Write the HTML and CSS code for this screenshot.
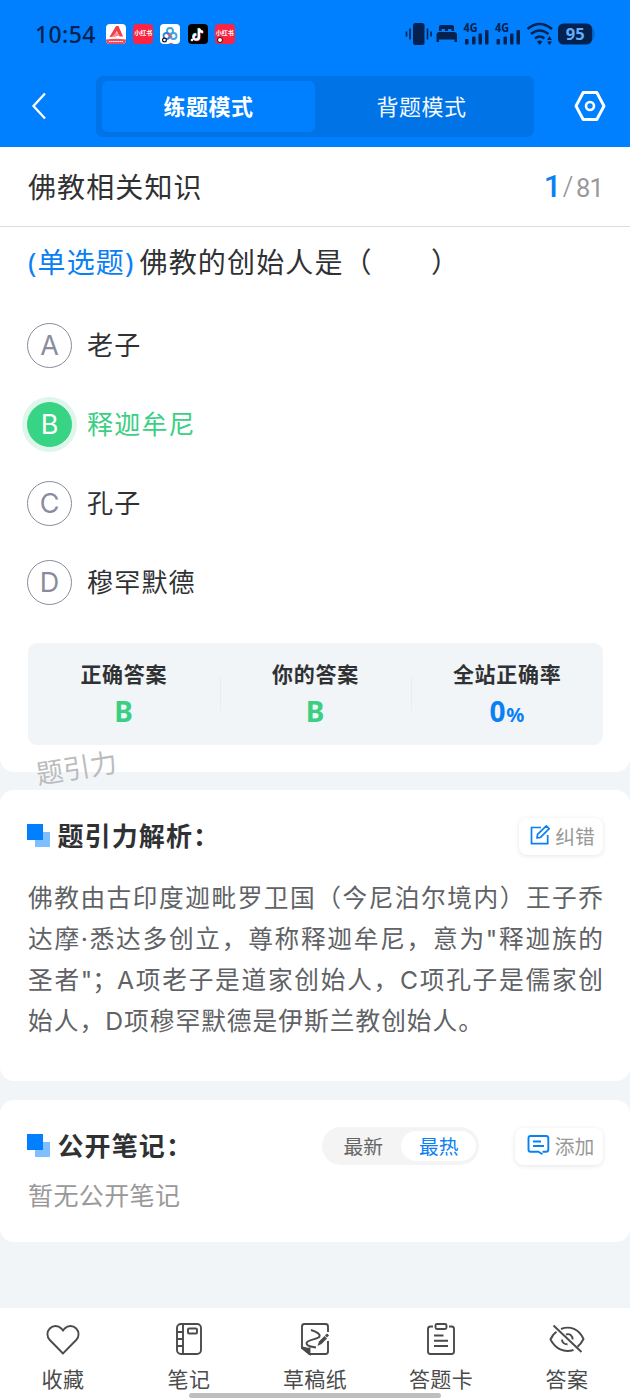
FILE: index.html
```html
<!DOCTYPE html>
<html lang="zh-CN">
<head>
<meta charset="utf-8">
<title>佛教相关知识</title>
<link rel="stylesheet" href="styles.css">
</head>
<body>
<div class="screen">
  <header class="top">
    <div class="status">
      <span class="clock">10:54</span>
      <div class="apps">
        <svg class="app" viewBox="0 0 20 20"><rect width="20" height="20" rx="4" fill="#fff"/><path d="M0 15.500Q10 14 20 15.500V16a4 4 0 0 1-4 4H4a4 4 0 0 1-4-4z" fill="#f14b58"/><path d="M3.500 13 10 2h2.500l4.500 10.500h-3.500L10.800 7 7 13z" fill="#ee3f4d"/><path d="m5 13 6-5 1.500 3 4 1.500q-5-1-8 .5z" fill="#f88b90"/><path d="M3 17.500h14" stroke="#fff" stroke-width="1" stroke-dasharray="1.500 .6"/></svg>
        <span class="app red">小红书</span>
        <svg class="app" viewBox="0 0 20 20"><rect width="20" height="20" rx="4" fill="#fff"/><g fill="none" stroke-width="1.800"><circle cx="10" cy="7" r="3" stroke="#35a6e6"/><circle cx="6.500" cy="12" r="3" stroke="#2f7fe0"/><circle cx="13.500" cy="12" r="3" stroke="#35a6e6"/><path d="m8 10 4 3" stroke="#f0506a"/></g><circle cx="4.500" cy="16" r="1.900" fill="#fff" stroke="#111" stroke-width="1.200"/><path d="M8 20q3-2 6 0z" fill="#f14b58"/></svg>
        <svg class="app" viewBox="0 0 20 20"><rect width="20" height="20" rx="4" fill="#000"/><g fill="none" stroke-width="2.200"><path d="M10.500 4v8.500a2.700 2.700 0 1 1-2.700-2.700M10.500 4q.5 3 4 3.600" stroke="#25e5e5"/><path d="M11.500 5v8.500a2.700 2.700 0 1 1-2.700-2.700M11.500 5q.5 3 4 3.600" stroke="#fb2c55"/><path d="M11 4.500V13a2.700 2.700 0 1 1-2.700-2.700M11 4.500q.5 3 4 3.600" stroke="#fff"/></g><circle cx="4" cy="16" r="1.300" fill="#fff"/></svg>
        <span class="app red dot">小红书</span>
      </div>
      <svg class="sys" viewBox="0 -6 190 36" width="190" height="36" fill="#04224d">
        <rect x="8" y="1" width="11.500" height="22" rx="2.500"/><path d="M5 6.500v11M1.500 9.500v5M22.500 6.500v11M26 9.500v5" stroke="#04224d" stroke-width="1.600"/>
        <path d="M34 9V5q0-2 2-2h11q2 0 2 2v4h-2.500V7h-3.500v2h-3V7h-3.500v2zM31.500 20v-7q0-3 3-3h14.500q3 0 3 3v7h-2.500v-2.500h-15.500V20z"/>
        <text x="58.500" y="10" class="net" textLength="14" lengthAdjust="spacingAndGlyphs">4G</text><rect x="60" y="17" width="3.500" height="5.500" rx="1"/><rect x="67" y="14.500" width="3.500" height="8" rx="1"/><rect x="73.500" y="11.500" width="3.500" height="11" rx="1"/><rect x="80" y="8" width="3.500" height="14.500" rx="1"/>
        <text x="90" y="10" class="net" textLength="14" lengthAdjust="spacingAndGlyphs">4G</text><rect x="91.500" y="17" width="3.500" height="5.500" rx="1"/><rect x="98.500" y="14.500" width="3.500" height="8" rx="1"/><rect x="105" y="11.500" width="3.500" height="11" rx="1"/><rect x="111.500" y="8" width="3.500" height="14.500" rx="1"/>
        <path d="M122.500 7Q134.500-3 147 7M126 12q8.500-7 17.500 0M130 16.500q4.800-4 9.500 0" fill="none" stroke="#04224d" stroke-width="2.400"/><path d="M132 19.500q2.700-2 5.400 0L134.700 23zM144.500 14l2.500 4h-5zM144.500 23l-2.500-3.500h5z"/>
        <path d="M184 4q5.500 1 5.500 8t-5.500 8z" fill="#0462c5"/><rect x="153" y="1.500" width="34" height="21" rx="5.500"/><text x="170.300" y="18.200" class="pct" text-anchor="middle">95</text>
      </svg>
    </div>
    <div class="bar">
      <svg class="back" viewBox="0 0 16 28" width="16" height="28"><path d="M14 1.500 2.500 14 14 26.500" fill="none" stroke="#fff" stroke-width="2.300"/></svg>
      <div class="modes"><span class="mode on">练题模式</span><span class="mode">背题模式</span></div>
      <svg class="gear" viewBox="0 0 32 32" width="32" height="32" fill="none" stroke="#fff"><path d="M9.200 2.500h13.600L30 16l-7.200 13.500H9.200L2 16z" stroke-width="2.900" stroke-linejoin="round"/><circle cx="16" cy="16" r="4" stroke-width="2.600"/></svg>
    </div>
  </header>
  <main>
    <section class="quiz">
      <div class="title"><h1>佛教相关知识</h1><p class="count"><b>1</b><i>/</i>81</p></div>
      <p class="question"><span class="kind">(单选题)</span>佛教的创始人是（　　）</p>
      <ul class="options">
        <li><span class="key">A</span>老子</li>
        <li class="right"><span class="key">B</span>释迦牟尼</li>
        <li><span class="key">C</span>孔子</li>
        <li><span class="key">D</span>穆罕默德</li>
      </ul>
      <div class="stats">
        <div class="stat"><span>正确答案</span><strong>B</strong></div>
        <div class="stat"><span>你的答案</span><strong>B</strong></div>
        <div class="stat"><span>全站正确率</span><strong class="rate">0<small>%</small></strong></div>
      </div>
      <span class="watermark">题引力</span>
    </section>
    <section class="card analysis">
      <div class="head">
        <i class="mark"></i><h2>题引力解析：</h2>
        <button class="action fix"><svg viewBox="0 0 22 22" width="22" height="22" fill="none" stroke="#0b80f5" stroke-width="1.700"><path d="M12 3.500H2.500v16.200h16.200V11"/><path d="m8 14 .6-3.600 8.700-8.600 2.900 2.900-8.700 8.700z" stroke-linejoin="round"/></svg>纠错</button>
      </div>
      <p class="text"><span>佛教由古印度迦毗罗卫国（今尼泊尔境内）王子乔</span><span>达摩·悉达多创立，尊称释迦牟尼，意为"释迦族的</span><span>圣者"；A项老子是道家创始人，C项孔子是儒家创</span><span>始人，D项穆罕默德是伊斯兰教创始人。</span></p>
    </section>
    <section class="card notes">
      <div class="head">
        <i class="mark"></i><h2>公开笔记：</h2>
        <div class="sort"><span>最新</span><span class="on">最热</span></div>
        <button class="action add"><svg viewBox="0 0 23 22" width="23" height="22" fill="none" stroke="#0b80f5" stroke-width="1.900"><path d="M15.500 17.800H19q2.300 0 2.300-2V4q0-2-2.300-2H3.500q-2 0-2 2v11.800q0 2 2 2h8l4 2.500" stroke-linejoin="round"/><path d="M6 7.500h8M6 12h11"/></svg>添加</button>
      </div>
      <p class="empty">暂无公开笔记</p>
    </section>
  </main>
  <nav class="tabs">
    <a><svg viewBox="0 0 36 36" width="36" height="36"><path d="M18 32.500 4.800 19a8.200 8.200 0 0 1 0-11.500 8 8 0 0 1 11.500 0L18 9.500l1.700-2a8 8 0 0 1 11.500 0 8.200 8.200 0 0 1 0 11.500z"/></svg>收藏</a>
    <a><svg viewBox="0 0 36 36" width="36" height="36"><rect x="6" y="3" width="24" height="30" rx="4"/><path d="M12 3v30M6 11h6M6 18h6M6 25h6"/><rect x="17" y="7.500" width="9" height="5" rx="1"/></svg>笔记</a>
    <a><svg viewBox="0 0 36 36" width="36" height="36"><path d="M31 11V5.500Q31 3 28.500 3h-21Q5 3 5 5.500V27l7.500 6h16q2.500 0 2.500-2.500V20"/><path d="M5 26.500q5 1.500 7.500 1V33z" fill="#4b4b4b"/><path d="M14 9c5 1.500 9.500 4 8.500 6.500-1.500 3-12 3-13 6.500-.3 3 5 4 9.500 4.500"/><path d="m20.500 25 1.500-4.500L27.500 15l2.500 2.500-5.500 5.500z" fill="#4b4b4b" stroke="none"/><path d="m29 13.500 2 2" stroke-width="3"/></svg>草稿纸</a>
    <a><svg viewBox="0 0 36 36" width="36" height="36"><path d="M10 5.500H7.500Q5 5.500 5 8v22.500Q5 33 7.500 33h21q2.500 0 2.500-2.500V8q0-2.500-2.500-2.500H26"/><rect x="12.500" y="3" width="11" height="5" rx="1.500"/><path d="M11 14.500h9.500M11 19.800h14M11 25h14"/></svg>答题卡</a>
    <a><svg viewBox="0 0 36 36" width="36" height="36"><path d="M12 8C21 4.500 30 8 34.500 18q-2.500 5-6 7.800M24.500 29C15 32 6.500 28 1.500 18.500q2.300-5.300 6-7.700"/><path d="M17 13.500c4-1.300 7 1.500 6.500 5M13 18.500c0 3 2.500 5 5.500 4.800M4.500 4.500 32.500 31"/></svg>答案</a>
    <i class="home"></i>
  </nav>
</div>
</body>
</html>
```
FILE: styles.css
```css
* { box-sizing: border-box; }
body, h1, h2, p, ul { margin: 0; padding: 0; }
body { background: #f1f5f8; font-family: "Noto Sans", "Noto Sans CJK SC", sans-serif; color: #303133; }
ul { list-style: none; }
i { font-style: normal; }
.screen { width: 630px; height: 1400px; display: flex; flex-direction: column; overflow: hidden; }
main { flex: 1; }

/* Top */
.top { height: 147px; background: #0080ff; }
.status { height: 68px; display: flex; align-items: center; padding: 0 35px 0 35px; }
.clock { width: 71px; font-size: 23px; font-weight: 500; color: #04224d; letter-spacing: .4px; line-height: 30px; }
.apps { display: flex; gap: 7.200px; }
.app { width: 20px; height: 20px; display: block; }
.red { position: relative; border-radius: 4px; background: #fb2443; color: #fff; font-size: 6px; font-weight: 700; line-height: 19px; text-align: center; white-space: nowrap; }
.dot::after { content: ""; position: absolute; left: 2px; bottom: 1px; width: 4px; height: 4px; border-radius: 50%; background: #fff; border: 1px solid #111; }
.sys { margin-left: auto; }
.net { font: 700 12px "Noto Sans", sans-serif; }
.pct { font: 700 16.500px "Noto Sans", sans-serif; fill: #62aefb; }
.bar { height: 79px; display: flex; align-items: center; padding: 0 24px 3px 31px; }
.modes { display: flex; width: 438px; height: 61px; margin-left: 49px; padding: 5px 6px; border-radius: 7px; background: #0073e6; }
.mode { flex: 1; display: flex; align-items: center; justify-content: center; padding-bottom: 2px; border-radius: 6px; color: #f2f9ff; font-size: 22px; letter-spacing: .5px; }
.mode.on { background: #0080ff; color: #fff; font-weight: 700; }
.gear { margin-left: auto; }

/* Question */
.quiz { position: relative; height: 625px; background: #fff; border-radius: 0 0 14px 14px; }
.title { height: 80px; display: flex; align-items: center; justify-content: space-between; padding: 0 27px 0 28px; border-bottom: 1px solid #dcdcdc; }
h1 { font-size: 28px; font-weight: 400; letter-spacing: 1.100px; line-height: 40px; }
.count { display: flex; align-items: baseline; color: #999; font-family: Roboto, sans-serif; font-size: 25.500px; letter-spacing: -.8px; line-height: 40px; }
.count b { color: #0b80f5; font-size: 31px; font-weight: 500; }
.count i { margin: 0 4px 0 2px; font-family: "Noto Sans", sans-serif; font-size: 29px; font-weight: 300; }
.question { padding: 14px 28px 0; font-size: 28px; letter-spacing: 1.150px; line-height: 42px; white-space: pre; }
.kind { color: #0b80f5; margin-right: 5px; }
.options { padding: 40px 27px 0; }
.options li { display: flex; align-items: center; gap: 15px; height: 45px; margin-bottom: 34px; font-size: 26px; letter-spacing: 1.200px; line-height: 43px; }
.key { width: 45px; height: 45px; border: 1.500px solid #8a8c9d; border-radius: 50%; color: #8a8c9d; font-family: Inter, sans-serif; font-size: 27px; line-height: 43px; text-align: center; letter-spacing: 0; }
.right { color: #3bcf84; }
.right .key { border-color: #38d486; background: #38d486; color: #fff; box-shadow: 0 0 0 5px #def7ea; }
.stats { display: flex; height: 102px; margin: 38px 27px 0 28px; padding-top: 15px; border-radius: 9px; background: #f1f5f8; }
.stat { flex: 1; display: flex; flex-direction: column; align-items: center; position: relative; font-size: 21px; font-weight: 700; letter-spacing: .7px; line-height: 32px; }
.stat + .stat::before { content: ""; position: absolute; left: 0; top: 18px; height: 35px; border-left: 1px solid #e9edf1; }
.stat strong { color: #3bcf84; font-size: 28px; font-weight: 700; line-height: 42px; }
.stat .rate { color: #0b80f5; }
.rate small { font-size: 20px; }
.watermark { position: absolute; z-index: 1; left: 36px; top: 601px; color: #bbbcbd; font-size: 27px; line-height: 40px; transform: rotate(-9deg); }

/* Cards */
.card { background: #fff; border-radius: 14px; padding: 0 27px 0 28px; }
.analysis { height: 291px; margin-top: 18px; padding-top: 26px; }
.notes { height: 142px; margin-top: 19px; padding-top: 26px; }
.head { display: flex; align-items: center; height: 40px; }
.mark { position: relative; width: 22px; height: 22px; margin-right: 7.500px; background: linear-gradient(#80bfff, #80bfff) 100% 100% / 15px 15px no-repeat; }
.mark::before { content: ""; position: absolute; left: -1px; top: -1px; width: 16px; height: 16px; background: #0080ff; }
h2 { font-size: 26px; font-weight: 700; letter-spacing: 1.100px; line-height: 40px; white-space: nowrap; }
.action { display: flex; align-items: center; justify-content: center; gap: 5px; height: 37px; padding: 0 0 2px; margin: 0; border: 0; border-radius: 8px; background: #fff; box-shadow: 0 1px 5px rgba(0, 0, 0, .1); color: #999; font: 400 19.800px "Noto Sans CJK SC", sans-serif; }
.fix { width: 84px; margin-left: auto; padding-left: 2px; gap: 4px; }
.add { width: 88px; margin-left: 36px; padding-left: 3px; }
.text { padding-top: 22px; color: #606266; font-family: Inter, "Noto Sans CJK SC", sans-serif; font-size: 24.700px; line-height: 41px; }
.text span { display: block; white-space: nowrap; text-align: justify; text-align-last: justify; }
.text span:last-child { width: 455px; }
.sort { display: flex; width: 157px; height: 38px; margin-left: auto; padding: 4px 3px; border-radius: 19px; background: #f4f4f4; color: #666; font-size: 19.800px; }
.sort span { flex: 1; display: flex; align-items: center; justify-content: center; padding: 0 0 2px 1px; border-radius: 15px; }
.sort .on { background: #fff; color: #0b80f5; }
.empty { padding-top: 9px; color: #999; font-size: 25px; letter-spacing: .4px; line-height: 40px; }

/* Bottom navigation */
.tabs { position: relative; display: flex; height: 92px; background: #fff; }
.tabs a { flex: 1; display: flex; flex-direction: column; align-items: center; padding-top: 13px; color: #4b4b4b; font-size: 21px; line-height: 32px; letter-spacing: .4px; }
.tabs svg { fill: none; stroke: #4b4b4b; stroke-width: 1.900; margin-bottom: 6px; }
.home { position: absolute; left: 189px; bottom: 2px; width: 252px; height: 5px; border-radius: 3px; background: #bfbfbf; }
```
